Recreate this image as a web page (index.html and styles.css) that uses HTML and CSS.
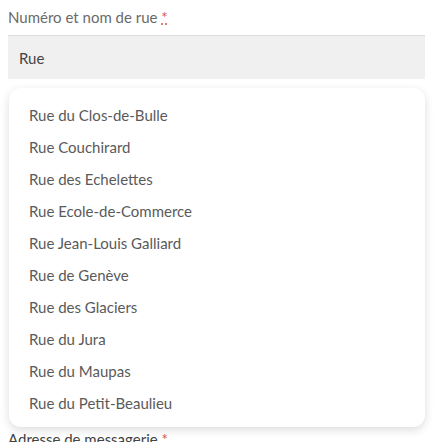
FILE: index.html
```html
<!DOCTYPE html>
<html>
<head>
<meta charset="utf-8">
<title>Adresse</title>
<link rel="stylesheet" href="styles.css">
</head>
<body>

<div class="field">
	<label class="field-label" for="street">Numéro et nom de rue <abbr class="req" title="obligatoire">*</abbr></label>
	<input class="field-input" id="street" type="text" value="Rue">
	<ul class="suggest">
		<li>Rue du Clos-de-Bulle</li>
		<li>Rue Couchirard</li>
		<li>Rue des Echelettes</li>
		<li>Rue Ecole-de-Commerce</li>
		<li>Rue Jean-Louis Galliard</li>
		<li>Rue de Genève</li>
		<li>Rue des Glaciers</li>
		<li>Rue du Jura</li>
		<li>Rue du Maupas</li>
		<li>Rue du Petit-Beaulieu</li>
	</ul>
</div>

<div class="field">
	<label class="field-label" for="mail">Adresse de messagerie <abbr class="req" title="obligatoire">*</abbr></label>
</div>

</body>
</html>
```

FILE: styles.css
```css
body{
	margin: 0;padding: 0 13px 0 8px;
	background: #fff;
	font-family: Lato, "Liberation Sans", sans-serif;
	font-size: 15px;color: #5a5a5a;
}

.field{position: relative;}

.field-label{
	display: block;
	padding-top: 7px;height: 28px;line-height: 20px;
	color: #6a6a6a;
}
.req{color: #d9534f;text-decoration: underline dotted;}

.field-input{
	display: block;box-sizing: border-box;
	width: 100%;height: 44px;
	margin: 0;padding: 0 11px;
	border: none;border-top: 1px solid #dcdcdc;
	background: #f0f0f0;
	font: inherit;font-size: 15px;color: #444;
	outline: none;
}

.suggest{
	list-style: none;
	margin: 9px 0 0 1px;padding: 11px 0 8px;
	background: #fff;
	border-radius: 12px;
	box-shadow: 0 3px 10px rgba(0,0,0,0.14);
	position: relative;z-index: 10;
}
.suggest li{
	height: 32px;line-height: 32px;
	padding: 0 20px;
	color: #5a5a5a;
}

.field + .field{margin-top: -5px;}
.field + .field .field-label{color: #444;}
```
